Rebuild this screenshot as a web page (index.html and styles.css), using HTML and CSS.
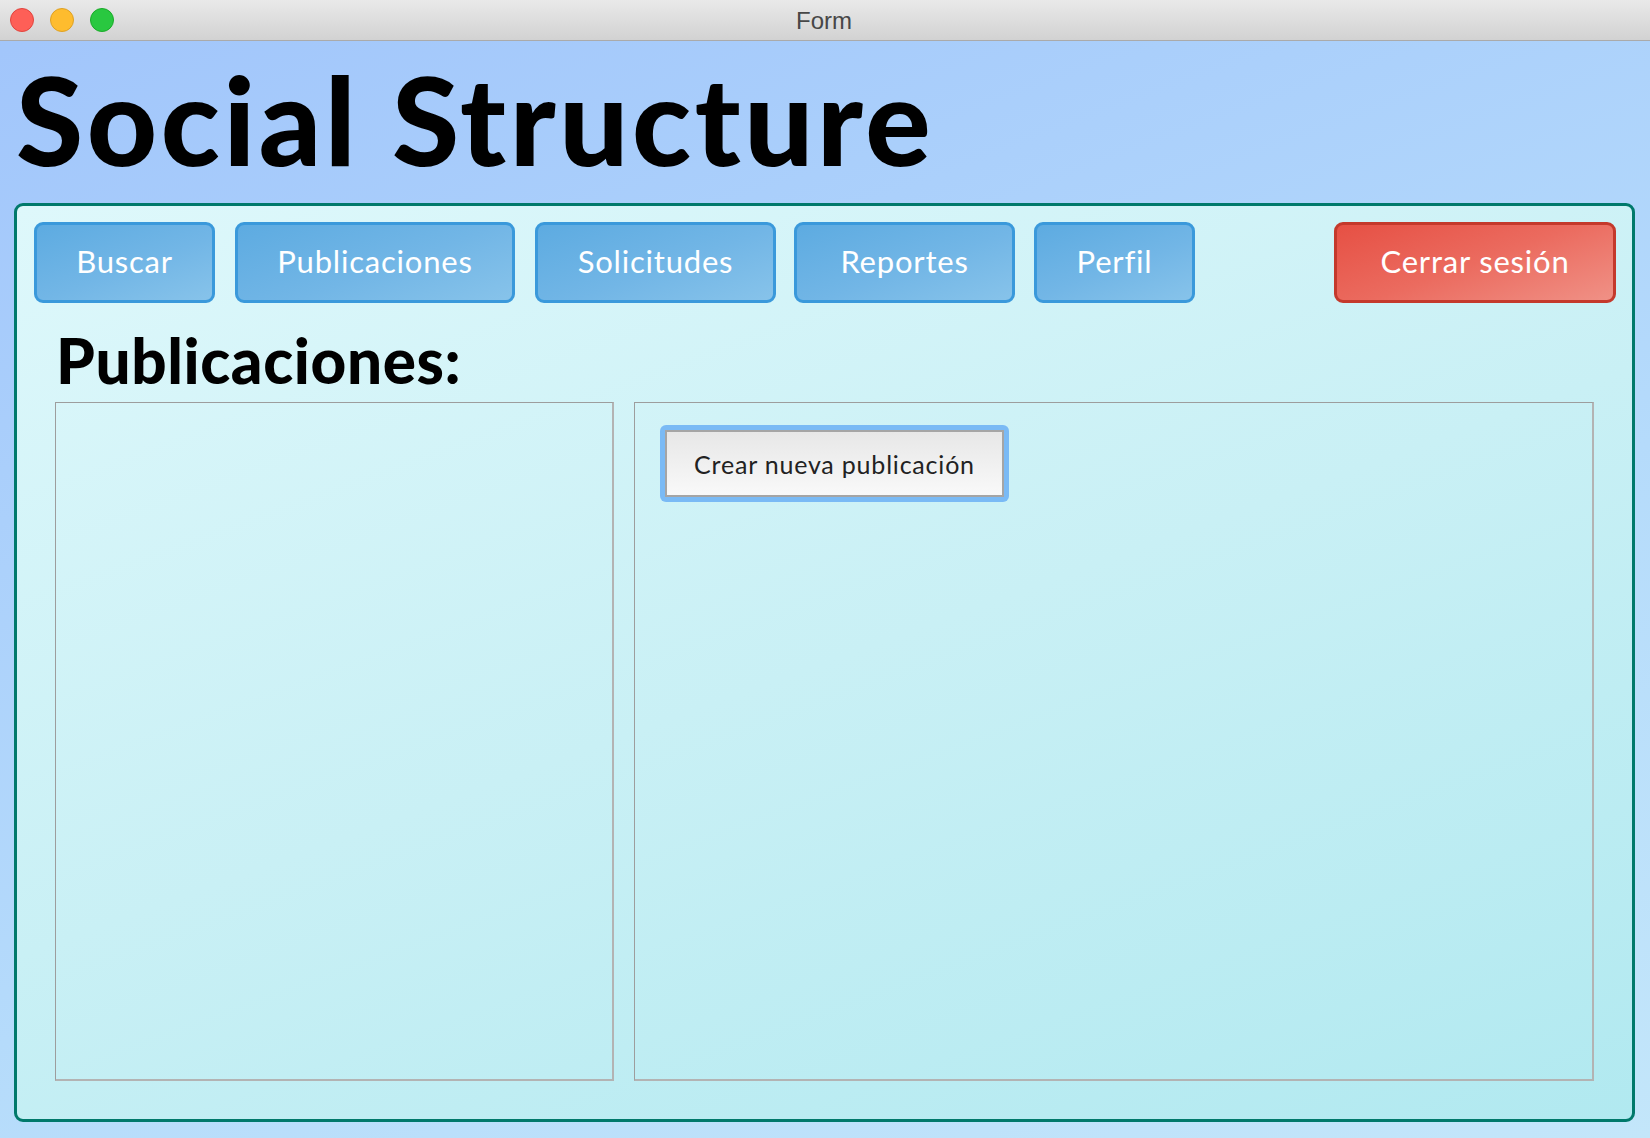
FILE: index.html
```html
<!DOCTYPE html>
<html lang="es">
<head>
<meta charset="utf-8">
<title>Form</title>
<link rel="stylesheet" href="styles.css">
</head>
<body>
<div class="window">
  <header class="titlebar">
    <div class="lights">
      <span class="light red"></span>
      <span class="light yellow"></span>
      <span class="light green"></span>
    </div>
    <div class="window-title">Form</div>
  </header>
  <main class="content">
    <h1 class="app-title">Social Structure</h1>
    <section class="panel">
      <nav class="toolbar">
        <button class="nav-btn btn-buscar">Buscar</button>
        <button class="nav-btn btn-publicaciones">Publicaciones</button>
        <button class="nav-btn btn-solicitudes">Solicitudes</button>
        <button class="nav-btn btn-reportes">Reportes</button>
        <button class="nav-btn btn-perfil">Perfil</button>
        <span class="spacer"></span>
        <button class="logout-btn">Cerrar sesión</button>
      </nav>
      <h2 class="section-title">Publicaciones:</h2>
      <div class="columns">
        <div class="list-box"></div>
        <div class="detail-box">
          <div class="focus-ring">
            <button class="create-btn">Crear nueva publicación</button>
          </div>
        </div>
      </div>
    </section>
  </main>
</div>
</body>
</html>
```
FILE: styles.css
```css
* { box-sizing: border-box; }
html, body { margin: 0; padding: 0; }
body {
  width: 1650px;
  height: 1138px;
  overflow: hidden;
  font-family: "Lato", "Noto Sans", "DejaVu Sans", sans-serif;
}
.window {
  width: 1650px;
  height: 1138px;
  display: flex;
  flex-direction: column;
  background: linear-gradient(160deg, #a1c5fb 0%, #b5dbfb 60%, #c3e6fa 100%);
}
.titlebar {
  height: 41px;
  flex: none;
  position: relative;
  background: linear-gradient(#e9e9e9, #d2d2d2);
  border-bottom: 1px solid #aaaaaa;
  display: flex;
  align-items: center;
}
.lights {
  display: flex;
  gap: 16px;
  padding-left: 10px;
}
.light {
  width: 24px;
  height: 24px;
  border-radius: 50%;
  display: block;
}
.red { background: #fe5f57; border: 1px solid #e1443e; }
.yellow { background: #febc2e; border: 1px solid #dea123; }
.green { background: #29c840; border: 1px solid #1aab29; }
.window-title {
  position: absolute;
  left: 0;
  right: 0;
  top: 0;
  height: 40px;
  line-height: 42px;
  text-align: center;
  font-family: "Liberation Sans", "Helvetica", sans-serif;
  font-size: 24px;
  color: #474747;
  padding-right: 2px;
}
.content {
  flex: 1;
  display: flex;
  flex-direction: column;
  padding: 0 15px 16px 14px;
}
.app-title {
  margin: 17px 0 23px 2px;
  font-family: "Lato", sans-serif;
  font-weight: 900;
  font-size: 122px;
  line-height: 122px;
  letter-spacing: 3.6px;
  color: #000;
}
.panel {
  flex: 1;
  border: 3px solid #00796b;
  border-radius: 9px;
  background: linear-gradient(160deg, #def8fb 0%, #c9f0f5 50%, #b1e9f0 100%);
  padding: 16px 16px 38px 17px;
  display: flex;
  flex-direction: column;
}
.toolbar {
  display: flex;
  align-items: stretch;
  gap: 20px;
  height: 81px;
}
.spacer { flex: 1; }
.nav-btn, .logout-btn {
  font-family: "Lato", sans-serif;
  font-size: 31px;
  letter-spacing: 0.8px;
  color: #ffffff;
  border-radius: 9px;
  border: 3px solid #3a99db;
  background: linear-gradient(160deg, #5dabe1 0%, #72b6e6 55%, #87c3ea 100%);
  padding: 0 0 3px 0;
  cursor: pointer;
}
.btn-buscar { width: 181px; }
.btn-publicaciones { width: 280px; }
.btn-solicitudes { width: 241px; }
.btn-reportes { width: 221px; margin-left: -2px; }
.btn-perfil { width: 161px; margin-left: -1px; }
.logout-btn {
  width: 282px;
  border-color: #c4392c;
  background: linear-gradient(160deg, #e65044 0%, #eb6b5f 50%, #f09186 100%);
}
.section-title {
  margin: 22px 0 7px 22px;
  font-family: "Lato", sans-serif;
  font-weight: 900;
  font-size: 62px;
  line-height: 70px;
  letter-spacing: 0.6px;
  color: #000;
}
.columns {
  flex: 1;
  display: flex;
  gap: 20px;
  padding: 0 22px 0 21px;
}
.list-box {
  width: 559px;
  border: 1px solid #9d9d9d;
  border-right: 2px solid #b3b3b3;
  border-bottom: 2px solid #b3b3b3;
}
.detail-box {
  flex: 1;
  border: 1px solid #9d9d9d;
  border-right: 2px solid #b3b3b3;
  border-bottom: 2px solid #b3b3b3;
  padding: 22px 0 0 25px;
  display: flex;
  align-items: flex-start;
}
.focus-ring {
  padding: 5px;
  border-radius: 6px;
  background: #7abaf5;
}
.create-btn {
  display: block;
  width: 339px;
  height: 67px;
  border: 2px solid #a5a5a5;
  background: linear-gradient(#e7e7e7, #f9f9f9);
  font-family: "Lato", sans-serif;
  font-size: 25px;
  letter-spacing: 0.8px;
  color: #222;
  padding: 0;
}
```
